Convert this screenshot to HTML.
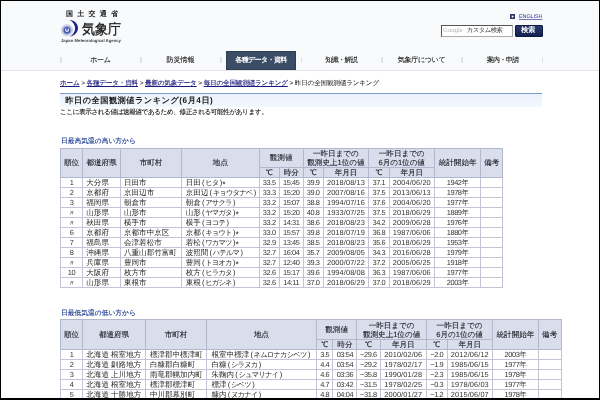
<!DOCTYPE html>
<html lang="ja">
<head>
<meta charset="utf-8">
<title>気象庁｜昨日の全国観測値ランキング</title>
<style>
html,body{margin:0;padding:0;}
body{width:600px;height:400px;overflow:hidden;background:#fff;position:relative;
  font-family:"Liberation Sans",sans-serif;color:#222;font-size:7.4px;line-height:1;text-rendering:geometricPrecision;}
*{box-sizing:border-box;}
#wrap{position:absolute;left:0;top:0;width:600px;height:400px;overflow:hidden;will-change:transform;}
.abs{position:absolute;white-space:nowrap;}
#frame{position:absolute;left:0;top:0;width:600px;height:400px;border:1px solid #000;border-bottom-width:2px;z-index:50;}
#hdr{position:absolute;left:0;top:0;width:600px;height:71px;background:#f9fafc;border-bottom:1px solid #e6e6ea;}
#eng{left:519px;top:15px;font-size:5.35px;color:#2a2a8c;text-decoration:underline;text-decoration-thickness:0.5px;text-underline-offset:0.5px;text-decoration-color:#7474b4;}
#engic{left:509.5px;top:14.2px;width:5.4px;height:5.2px;background:#2a3a6a;}
#sbox{left:440.5px;top:25px;width:72.5px;height:11.5px;background:#fff;border:1px solid #555;border-right-color:#aaa;border-bottom-color:#aaa;}
#sbox span{position:absolute;top:2.2px;font-size:6.4px;}
#sbtn{left:515px;top:25px;width:27.5px;height:11.5px;background:linear-gradient(#2a3b6e,#15224e);border:1px solid #101a40;border-radius:1px;color:#fff;font-weight:bold;font-size:7px;text-align:center;line-height:9.5px;padding-right:1px;}
.sep{position:absolute;top:57px;width:1.5px;height:6.4px;background:#e3e3e6;}
.nav{position:absolute;top:51px;height:18.5px;width:70px;text-align:center;font-size:7px;line-height:18.5px;color:#1a1a1a;white-space:nowrap;padding-top:1.2px;-webkit-text-stroke:0.12px #1a1a1a;}
.nav.on{background:#3b4d66;border:1px solid #2e3e55;color:#fff;font-weight:bold;line-height:16.5px;-webkit-text-stroke:0;}
#bc{left:60px;top:81.3px;font-size:6.6px;color:#111;letter-spacing:-0.19px;}
#bc a{color:#1c1c7c;text-decoration:underline;text-decoration-thickness:0.7px;-webkit-text-stroke:0.12px #1c1c7c;}
#h1{left:59.7px;top:92.5px;width:482.8px;height:14.5px;background:linear-gradient(#eaf1fb,#f4f8fd);border-top:1px solid #7f9aca;font-size:8.2px;font-weight:bold;color:#1a1a1a;padding:3.7px 0 0 5.6px;letter-spacing:0.5px;}
#note{left:60px;top:110.4px;font-size:6.7px;color:#111;letter-spacing:-0.5px;-webkit-text-stroke:0.1px #111;}
.sh{font-size:6.75px;color:#12338c;letter-spacing:0;-webkit-text-stroke:0.12px #12338c;}
table{position:absolute;border-collapse:collapse;table-layout:fixed;font-size:7.4px;color:#222;}
.g{margin-left:1.2px;line-height:0;}
.k{font-size:7.3px;letter-spacing:-0.85px;padding:0 1.4px 0 0.7px;line-height:0;}
.a{font-size:8.5px;letter-spacing:0;position:relative;top:2.1px;line-height:0;color:#111;}
td,th{border:1px solid #c2c5d6;padding:0;height:10px;text-align:center;white-space:nowrap;overflow:hidden;font-weight:normal;line-height:8px;color:#333;}
td{letter-spacing:-0.4px;}
td.d{letter-spacing:0.1px;}
td.q{font-size:8.5px;}
td.p,td.l{color:#262626;}
th{background:#d9deec;color:#1c1c24;-webkit-text-stroke:0.1px #1c1c24;border-color:#b2b7cd;font-size:7.6px;letter-spacing:-0.05px;}
td.l{text-align:left;padding-left:2.9px;font-size:7.55px;letter-spacing:0;}
td.s{padding-left:3.6px;}
#t2 td.l{padding-left:3.9px;}
#t2 td.s{padding-left:4.4px;}
td.p{text-align:left;padding-left:3.3px;font-size:7.55px;letter-spacing:0;}
tr.h1 th{height:19.6px;line-height:9.2px;}
</style>
</head>
<body>
<div id="wrap">
<div id="hdr"></div>

<svg class="abs" style="left:60px;top:19px" width="20" height="20" viewBox="0 0 20 20">
  <path d="M9.6 0.9 C15.4 1.4 18.1 5.4 18 9 C17.9 13.2 14.8 16.9 9.8 17.7 C13.4 15.6 15.2 12.4 15.1 9 C15 5.6 13 2.7 9.6 0.9 Z" fill="#1c2684"/>
  <circle cx="7" cy="11.2" r="6.2" fill="#d5d9e8"/>
  <circle cx="7" cy="11.2" r="4.5" fill="#9aa5d4"/>
  <circle cx="7" cy="11.2" r="3.3" fill="#4557ae"/>
  <path d="M5.7 9.5 V11.6 Q7 13.4 8.3 11.6 V9.5" stroke="#f2f4fa" stroke-width="1.1" fill="none"/>
</svg>
<svg class="abs" id="logotxt" style="left:60px;top:6px" width="70" height="40" viewBox="0 0 70 40">
  <text x="6" y="10.4" font-size="7" font-weight="bold" fill="#222" textLength="52" lengthAdjust="spacing">国土交通省</text>
  <text x="22" y="28.2" font-size="14.2" fill="#1c1c1c" stroke="#1c1c1c" stroke-width="0.35" textLength="39" lengthAdjust="spacingAndGlyphs">気象庁</text>
  <text x="1" y="36.3" font-size="4.3" font-weight="bold" fill="#444" textLength="60" lengthAdjust="spacingAndGlyphs">Japan Meteorological Agency</text>
</svg>

<div class="abs" id="engic"><svg width="5.4" height="5.2" viewBox="0 0 54 52" style="display:block"><path d="M18 12 L40 26 L18 40 Z" fill="#fff"/></svg></div>
<div class="abs" id="eng">ENGLISH</div>
<div class="abs" id="sbox"><span style="left:1.6px;color:#b8b8b8;font-size:6.2px;top:1.8px">Google</span><span style="left:25.2px;color:#333;letter-spacing:-0.55px">カスタム検索</span></div>
<div class="abs" id="sbtn">検索</div>

<div class="sep" style="left:60px"></div>
<div class="sep" style="left:140.2px"></div>
<div class="sep" style="left:220.4px"></div>
<div class="sep" style="left:300.6px"></div>
<div class="sep" style="left:381.2px"></div>
<div class="sep" style="left:461.4px"></div>
<div class="sep" style="left:541.5px"></div>
<div class="nav" style="left:65.4px;letter-spacing:-0.3px">ホーム</div>
<div class="nav" style="left:145.5px">防災情報</div>
<div class="nav on" style="left:226px;letter-spacing:-0.63px">各種データ・資料</div>
<div class="nav" style="left:306.3px;letter-spacing:-0.6px">知識・解説</div>
<div class="nav" style="left:386.6px;letter-spacing:-0.31px">気象庁について</div>
<div class="nav" style="left:467.7px;letter-spacing:-0.6px">案内・申請</div>

<div class="abs" id="bc"><a>ホーム</a> &gt; <a>各種データ・資料</a> &gt; <a>最新の気象データ</a> &gt; <a>毎日の全国観測値ランキング</a> &gt; 昨日の全国観測値ランキング</div>
<div class="abs" id="h1">昨日の全国観測値ランキング(6月4日)</div>
<div class="abs" id="note">ここに表示される値は速報値であるため、修正される可能性があります。</div>

<div class="abs sh" style="left:61px;top:139px">日最高気温の高い方から</div>
<table style="left:60px;top:147.5px;width:443.3px">
<colgroup><col style="width:22px"><col style="width:38.1px"><col style="width:61px"><col style="width:77.6px"><col style="width:20.1px"><col style="width:23.8px"><col style="width:20.1px"><col style="width:45.5px"><col style="width:20.3px"><col style="width:45.7px"><col style="width:45.9px"><col style="width:22.2px"></colgroup>
<tr class="h1"><th rowspan="2">順位</th><th rowspan="2">都道府県</th><th rowspan="2">市町村</th><th rowspan="2">地点</th><th colspan="2">観測値</th><th colspan="2">一昨日までの<br>観測史上1位の値</th><th colspan="2">一昨日までの<br>6月の1位の値</th><th rowspan="2">統計開始年</th><th rowspan="2">備考</th></tr>
<tr><th>℃</th><th>時分</th><th>℃</th><th>年月日</th><th>℃</th><th>年月日</th></tr>
<tr><td>1</td><td class="p">大分県</td><td class="l">日田市</td><td class="l s">日田<span class="g">(<span class="k">ヒタ</span>)</span><span class="a">*</span></td><td>33.5</td><td>15:45</td><td>39.9</td><td class="d">2018/08/13</td><td>37.1</td><td class="d">2004/06/20</td><td>1942年</td><td></td></tr>
<tr><td>2</td><td class="p">京都府</td><td class="l">京田辺市</td><td class="l s">京田辺<span class="g">(<span class="k">キョウタナベ</span>)</span></td><td>33.3</td><td>15:20</td><td>39.0</td><td class="d">2007/08/16</td><td>37.5</td><td class="d">2013/06/13</td><td>1978年</td><td></td></tr>
<tr><td>3</td><td class="p">福岡県</td><td class="l">朝倉市</td><td class="l s">朝倉<span class="g">(<span class="k">アサクラ</span>)</span></td><td>33.2</td><td>15:07</td><td>38.8</td><td class="d">1994/07/16</td><td>37.6</td><td class="d">2004/06/20</td><td>1977年</td><td></td></tr>
<tr><td class="q">〃</td><td class="p">山形県</td><td class="l">山形市</td><td class="l s">山形<span class="g">(<span class="k">ヤマガタ</span>)</span><span class="a">*</span></td><td>33.2</td><td>15:20</td><td>40.8</td><td class="d">1933/07/25</td><td>37.5</td><td class="d">2018/06/29</td><td>1889年</td><td></td></tr>
<tr><td class="q">〃</td><td class="p">秋田県</td><td class="l">横手市</td><td class="l s">横手<span class="g">(<span class="k">ヨコテ</span>)</span></td><td>33.2</td><td>14:31</td><td>38.6</td><td class="d">2018/08/23</td><td>34.2</td><td class="d">2009/06/28</td><td>1976年</td><td></td></tr>
<tr><td>6</td><td class="p">京都府</td><td class="l">京都市中京区</td><td class="l s">京都<span class="g">(<span class="k">キョウト</span>)</span><span class="a">*</span></td><td>33.0</td><td>15:57</td><td>39.8</td><td class="d">2018/07/19</td><td>36.8</td><td class="d">1987/06/06</td><td>1880年</td><td></td></tr>
<tr><td>7</td><td class="p">福島県</td><td class="l">会津若松市</td><td class="l s">若松<span class="g">(<span class="k">ワカマツ</span>)</span><span class="a">*</span></td><td>32.9</td><td>13:45</td><td>38.5</td><td class="d">2018/08/23</td><td>35.6</td><td class="d">2018/06/29</td><td>1953年</td><td></td></tr>
<tr><td>8</td><td class="p">沖縄県</td><td class="l">八重山郡竹富町</td><td class="l s">波照間<span class="g">(<span class="k">ハテルマ</span>)</span></td><td>32.7</td><td>16:04</td><td>35.7</td><td class="d">2009/08/05</td><td>34.3</td><td class="d">2016/06/28</td><td>1979年</td><td></td></tr>
<tr><td class="q">〃</td><td class="p">兵庫県</td><td class="l">豊岡市</td><td class="l s">豊岡<span class="g">(<span class="k">トヨオカ</span>)</span><span class="a">*</span></td><td>32.7</td><td>12:40</td><td>39.3</td><td class="d">2000/07/22</td><td>37.2</td><td class="d">2005/06/25</td><td>1918年</td><td></td></tr>
<tr><td>10</td><td class="p">大阪府</td><td class="l">枚方市</td><td class="l s">枚方<span class="g">(<span class="k">ヒラカタ</span>)</span></td><td>32.6</td><td>15:17</td><td>39.6</td><td class="d">1994/08/08</td><td>36.3</td><td class="d">1987/06/06</td><td>1977年</td><td></td></tr>
<tr><td class="q">〃</td><td class="p">山形県</td><td class="l">東根市</td><td class="l s">東根<span class="g">(<span class="k">ヒガシネ</span>)</span></td><td>32.6</td><td>14:11</td><td>37.0</td><td class="d">2018/06/29</td><td>37.0</td><td class="d">2018/06/29</td><td>2003年</td><td></td></tr>
</table>

<div class="abs sh" style="left:61px;top:310.6px">日最低気温の低い方から</div>
<table id="t2" style="left:60px;top:319.45px;width:501.5px">
<colgroup><col style="width:22px"><col style="width:63px"><col style="width:61.1px"><col style="width:109.9px"><col style="width:16.5px"><col style="width:23.8px"><col style="width:23.3px"><col style="width:46.3px"><col style="width:20.7px"><col style="width:45.5px"><col style="width:45.7px"><col style="width:22.7px"></colgroup>
<tr class="h1"><th rowspan="2">順位</th><th rowspan="2">都道府県</th><th rowspan="2">市町村</th><th rowspan="2">地点</th><th colspan="2">観測値</th><th colspan="2">一昨日までの<br>観測史上1位の値</th><th colspan="2">一昨日までの<br>6月の1位の値</th><th rowspan="2">統計開始年</th><th rowspan="2">備考</th></tr>
<tr><th>℃</th><th>時分</th><th>℃</th><th>年月日</th><th>℃</th><th>年月日</th></tr>
<tr><td>1</td><td class="p">北海道 根室地方</td><td class="l">標津郡中標津町</td><td class="l s">根室中標津<span class="g">(<span class="k">ネムロナカシベツ</span>)</span></td><td>3.5</td><td>03:54</td><td>−29.6</td><td class="d">2010/02/06</td><td>−2.0</td><td class="d">2012/06/12</td><td>2003年</td><td></td></tr>
<tr><td>2</td><td class="p">北海道 釧路地方</td><td class="l">白糠郡白糠町</td><td class="l s">白糠<span class="g">(<span class="k">シラヌカ</span>)</span></td><td>4.4</td><td>03:54</td><td>−29.2</td><td class="d">1978/02/17</td><td>−1.9</td><td class="d">1985/06/15</td><td>1977年</td><td></td></tr>
<tr><td>3</td><td class="p">北海道 上川地方</td><td class="l">雨竜郡幌加内町</td><td class="l s">朱鞠内<span class="g">(<span class="k">シュマリナイ</span>)</span></td><td>4.6</td><td>03:36</td><td>−35.8</td><td class="d">1990/01/28</td><td>−2.3</td><td class="d">1985/06/15</td><td>1978年</td><td></td></tr>
<tr><td>4</td><td class="p">北海道 根室地方</td><td class="l">標津郡標津町</td><td class="l s">標津<span class="g">(<span class="k">シベツ</span>)</span></td><td>4.7</td><td>03:42</td><td>−31.5</td><td class="d">1978/02/25</td><td>−0.3</td><td class="d">1978/06/03</td><td>1977年</td><td></td></tr>
<tr><td>5</td><td class="p">北海道 十勝地方</td><td class="l">中川郡幕別町</td><td class="l s">糠内<span class="g">(<span class="k">ヌカナイ</span>)</span></td><td>4.8</td><td>04:04</td><td>−31.8</td><td class="d">2000/01/27</td><td>−1.2</td><td class="d">2015/06/07</td><td>1978年</td><td></td></tr>
</table>

</div>
<div id="frame"></div>
</body>
</html>
